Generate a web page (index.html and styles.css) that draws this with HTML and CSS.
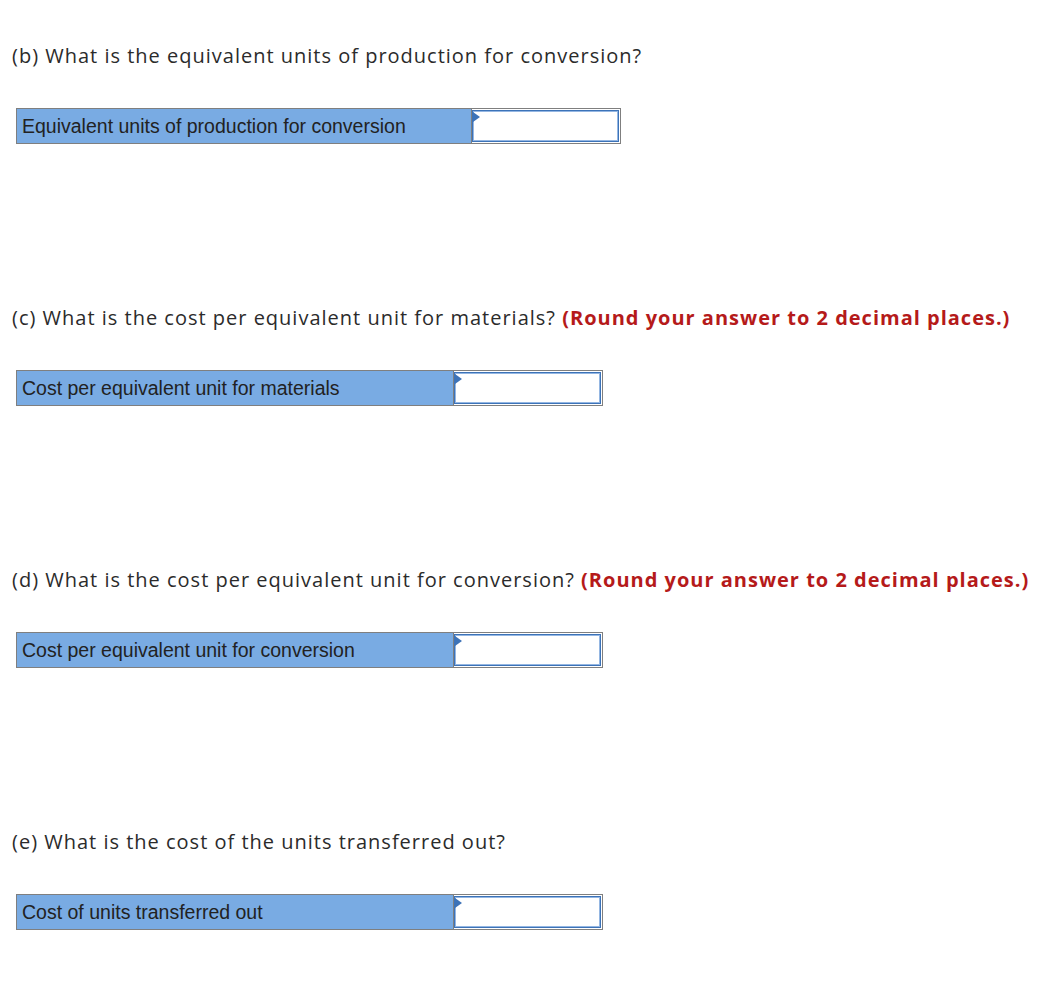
FILE: index.html
```html
<!DOCTYPE html>
<html lang="en">
<head>
    <meta charset="UTF-8">
    <title>Process costing questions</title>
    <link rel="stylesheet" href="styles.css">
</head>
<body>

<div class="part">
    <p class="question">(b) What is the equivalent units of production for conversion?</p>
    <table class="answerTable">
        <tr>
            <td class="answerLabel wide">Equivalent units of production for conversion</td>
            <td class="answerCell"><div class="answerInput"><span class="flag"></span></div></td>
        </tr>
    </table>
</div>

<div class="part">
    <p class="question">(c) What is the cost per equivalent unit for materials? <strong class="note">(Round your answer to 2 decimal places.)</strong></p>
    <table class="answerTable">
        <tr>
            <td class="answerLabel">Cost per equivalent unit for materials</td>
            <td class="answerCell"><div class="answerInput"><span class="flag"></span></div></td>
        </tr>
    </table>
</div>

<div class="part">
    <p class="question">(d) What is the cost per equivalent unit for conversion? <strong class="note">(Round your answer to 2 decimal places.)</strong></p>
    <table class="answerTable">
        <tr>
            <td class="answerLabel">Cost per equivalent unit for conversion</td>
            <td class="answerCell"><div class="answerInput"><span class="flag"></span></div></td>
        </tr>
    </table>
</div>

<div class="part">
    <p class="question">(e) What is the cost of the units transferred out?</p>
    <table class="answerTable">
        <tr>
            <td class="answerLabel">Cost of units transferred out</td>
            <td class="answerCell"><div class="answerInput"><span class="flag"></span></div></td>
        </tr>
    </table>
</div>

</body>
</html>
```

FILE: styles.css
```css
body {
    background-color: #ffffff;
    font-family: 'Open Sans', sans-serif;
    color: #2b2b2b;
    margin: 0;
    padding: 0 12px;
}

.part {
    height: 262px;
}

.question {
    font-size: 20px;
    letter-spacing: 1px;
    line-height: 28px;
    margin: 0;
    padding-top: 42px;
}

.note {
    color: #b51a1a;
    font-weight: bold;
}

.answerTable {
    border-collapse: collapse;
    border: 1px solid #7f7f7f;
    margin-top: 38px;
    margin-left: 4px;
}

.answerTable td {
    border: 1px solid #7f7f7f;
    padding: 0;
    height: 34px;
}

.answerLabel {
    background-color: #79abe3;
    font-family: 'Liberation Sans', Arial, sans-serif;
    font-size: 19.5px;
    color: #222222;
    width: 431px;
    padding: 0 0 0 5px !important;
    vertical-align: middle;
}

.answerLabel.wide {
    width: 449px;
}

.answerCell {
    background-color: #ffffff;
    width: 148px;
}

.answerInput {
    position: relative;
    height: 30px;
    margin: 1px 1px 1px 0;
    border: 1px solid #3d73b8;
    box-shadow: inset 0 0 0 1px #94b6e2;
}

.flag {
    position: absolute;
    left: 0;
    top: 1px;
    width: 0;
    height: 0;
    border-top: 5px solid transparent;
    border-bottom: 5px solid transparent;
    border-left: 7px solid #3d73b8;
}
```
